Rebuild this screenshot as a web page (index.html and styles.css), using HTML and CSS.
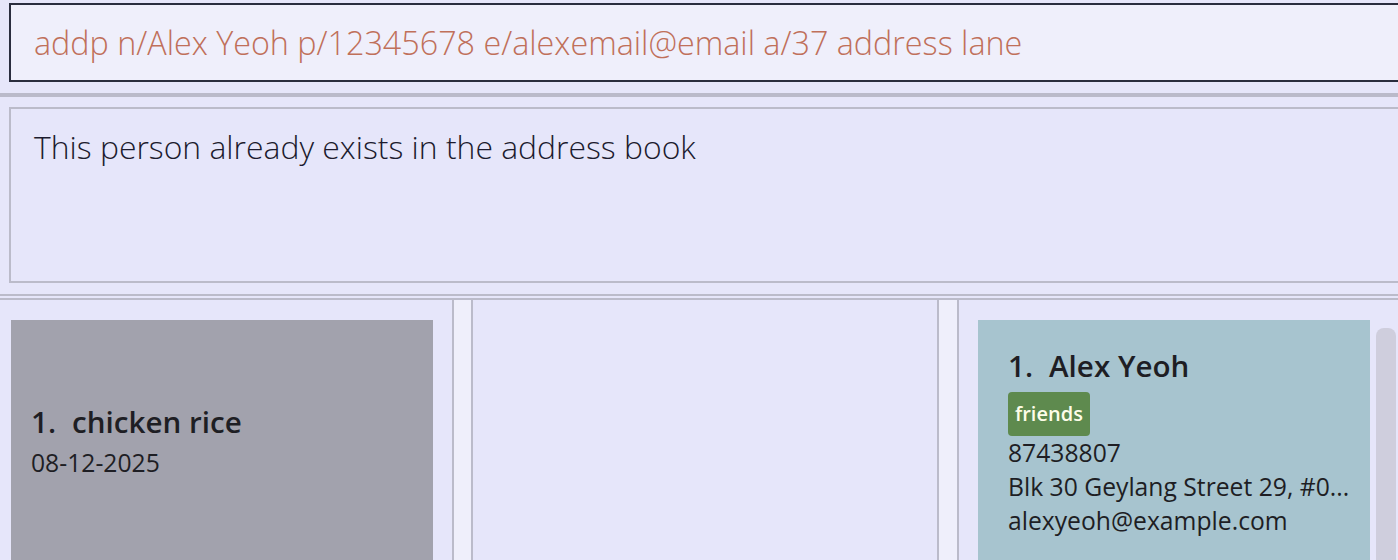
FILE: index.html
```html
<!DOCTYPE html>
<html>
<head>
<meta charset="utf-8">
<link rel="stylesheet" href="styles.css">
</head>
<body>
<div class="app">
  <div class="command-wrap">
    <div class="command">addp n/Alex Yeoh p/12345678 e/alexemail@email a/37 address lane</div>
  </div>
  <div class="divider"></div>
  <div class="result-wrap">
    <div class="result">This person already exists in the address book</div>
  </div>
  <div class="rule"></div>
  <div class="panels">
    <div class="panel panel-left">
      <div class="card card-grey">
        <div class="title"><span class="idx">1.</span><span>chicken rice</span></div>
        <div class="line date">08-12-2025</div>
      </div>
    </div>
    <div class="panel panel-mid"></div>
    <div class="panel panel-right">
      <div class="card card-blue">
        <div class="title"><span class="idx">1.</span><span>Alex Yeoh</span></div>
        <div class="tags"><span class="tag">friends</span></div>
        <div class="line">87438807</div>
        <div class="line">Blk 30 Geylang Street 29, #0...</div>
        <div class="line">alexyeoh@example.com</div>
      </div>
      <div class="scrollbar"><div class="thumb"></div></div>
    </div>
  </div>
</div>
</body>
</html>
```

FILE: styles.css
```css
html, body {
  margin: 0;
  padding: 0;
}
body {
  width: 1398px;
  height: 560px;
  overflow: hidden;
  background: #e6e6fa;
  font-family: "Open Sans", "Noto Sans", sans-serif;
}
.app {
  width: 1520px;
}
.command-wrap {
  padding: 3px 0 0 9px;
}
.command {
  box-sizing: border-box;
  height: 79px;
  border: 2px solid #2a2d3e;
  background: #efeffb;
  color: #c0705a;
  font-weight: 300;
  font-size: 32.3px;
  line-height: 75px;
  padding-left: 23px;
  white-space: nowrap;
}
.divider {
  margin-top: 11px;
  height: 4px;
  background: #babaca;
}
.result-wrap {
  padding: 10px 0 0 9px;
}
.result {
  box-sizing: border-box;
  height: 176px;
  border: 2px solid #bbbbca;
  color: #1c1b2e;
  font-weight: 300;
  font-size: 31.9px;
  line-height: 40px;
  padding: 18px 0 0 23px;
  white-space: nowrap;
}
.rule {
  margin-top: 11px;
  height: 2px;
  background: #bbbbca;
}
.panels {
  margin-top: 2px;
  margin-left: -11px;
  border-top: 2px solid #bbbbca;
  background: #efeffb;
  display: flex;
  gap: 17px;
  height: 300px;
}
.panel {
  box-sizing: border-box;
  background: #e6e6fa;
  border-left: 2px solid #bbbbca;
  border-right: 2px solid #bbbbca;
  padding: 20px 19px 0 20px;
}
.panel-left { width: 465px; }
.panel-mid { width: 468px; }
.panel-right {
  width: 540px;
  margin-left: 1px;
  display: flex;
  align-items: flex-start;
  padding-left: 19px;
  padding-right: 0;
}
.card {
  box-sizing: border-box;
  color: #1e1e24;
  height: 300px;
}
.card-grey {
  background: #a2a2ad;
  width: 422px;
  padding: 82px 0 0 20px;
}
.card-blue {
  background: #a7c4cf;
  width: 392px;
  padding: 26px 0 0 30px;
}
.title {
  font-weight: 600;
  font-size: 29.6px;
  line-height: 40px;
  white-space: nowrap;
}
.idx {
  margin-right: 16px;
}
.line {
  font-size: 24.7px;
  line-height: 34px;
  white-space: nowrap;
}
.date {
  margin-top: 4px;
}
.tags {
  display: flex;
  margin: 6px 0 0;
}
.tag {
  background: #5e8a4e;
  color: #fdfde8;
  font-weight: 600;
  font-size: 20px;
  line-height: 44px;
  height: 44px;
  padding: 0 7px;
  border-radius: 4px;
}
.scrollbar {
  margin-left: 6px;
  width: 20px;
  padding-top: 8px;
}
.thumb {
  height: 260px;
  background: #cfcedd;
  border-radius: 8px 8px 0 0;
}
```
